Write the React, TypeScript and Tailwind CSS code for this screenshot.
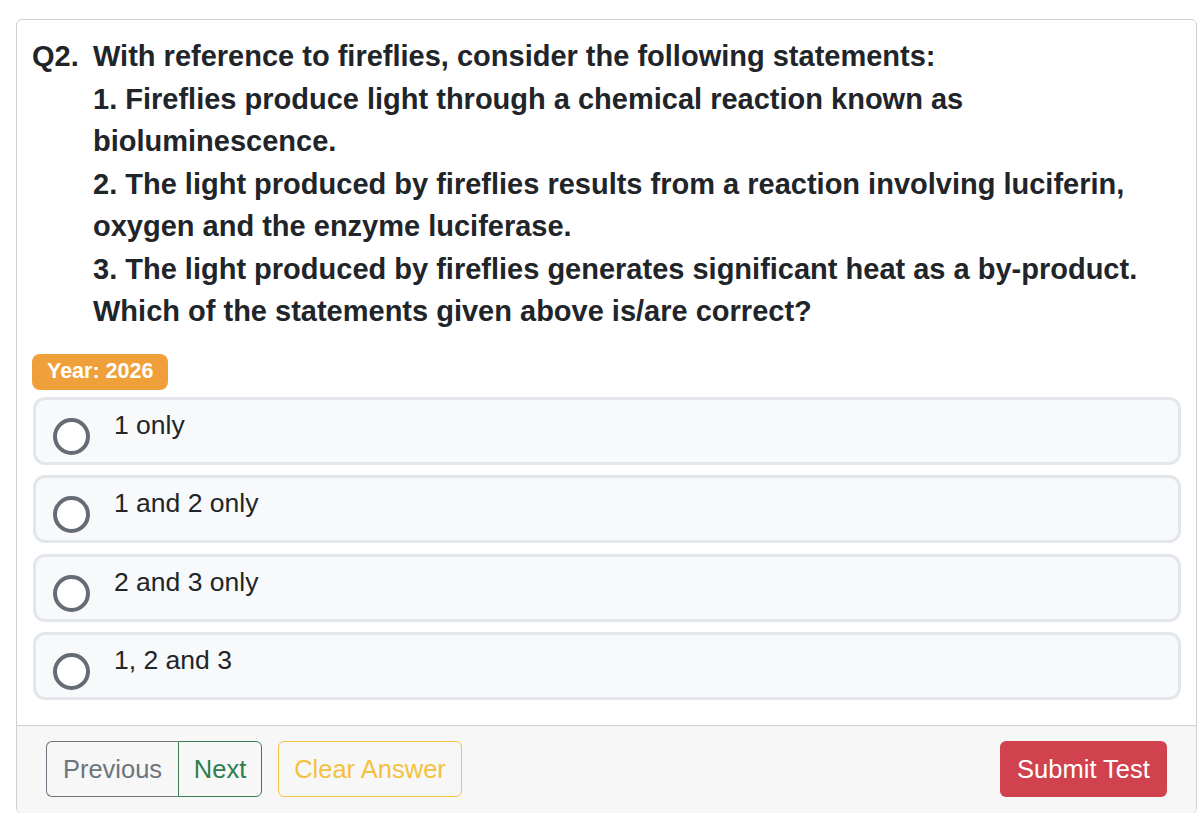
import React from "react";

const options = ["1 only", "1 and 2 only", "2 and 3 only", "1, 2 and 3"];

export default function App() {
  return (
    <div
      className="min-h-[813px] bg-white pt-[19px] pl-[16px] pr-[3px] text-[#212529]"
      style={{ fontFamily: '"Liberation Sans", Arial, sans-serif' }}
    >
      <div className="overflow-hidden rounded-[6px] border border-[#d0d0d0] bg-white">
        <div className="px-[15px] pt-[15px] pb-[25px]">
          <div className="flex text-[29px] font-bold leading-[42.5px]">
            <div className="w-[61px] shrink-0">Q2.</div>
            <div>
              <div>With reference to fireflies, consider the following statements:</div>
              <div>1. Fireflies produce light through a chemical reaction known as bioluminescence.</div>
              <div>2. The light produced by fireflies results from a reaction involving luciferin, oxygen and the enzyme luciferase.</div>
              <div>3. The light produced by fireflies generates significant heat as a by-product.</div>
              <div>Which of the statements given above is/are correct?</div>
            </div>
          </div>
          <div className="mt-[21px] inline-flex h-[36px] items-center rounded-[8px] bg-[#f0a03a] px-[15px] text-[21.5px] font-bold text-white">
            Year: 2026
          </div>
          <div className="mt-[7px] ml-[1px] flex flex-col gap-[10.5px]">
            {options.map((o) => (
              <div
                key={o}
                className="flex h-[68px] items-start rounded-[12px] border-[3px] border-[#e3e7eb] bg-[#f8f9fa] pl-[17px]"
              >
                <div className="mt-[18px] h-[37px] w-[37px] shrink-0 rounded-full border-[4px] border-[#656c76] bg-white" />
                <div className="ml-[24px] mt-[5px] text-[26.5px] leading-[40px] text-[#212529]">{o}</div>
              </div>
            ))}
          </div>
        </div>
        <div className="flex items-center justify-between border-t border-[#d0d0d0] bg-[#f7f7f7] px-[29px] pt-[15px] pb-[16px]">
          <div className="flex items-center gap-[16px]">
            <div className="flex">
              <button className="h-[56px] w-[132px] rounded-l-[6px] border-[1.5px] border-r-0 border-[#6c757d] text-[25.5px] text-[#6c757d]">
                Previous
              </button>
              <button className="h-[56px] w-[84px] rounded-r-[6px] border-[1.5px] border-[#3a7d55] text-[25.5px] text-[#2e7d4f]">
                Next
              </button>
            </div>
            <button className="h-[56px] w-[184px] rounded-[6px] border-[1.5px] border-[#f6c443] text-[25.5px] text-[#f4c13f]">
              Clear Answer
            </button>
          </div>
          <button className="h-[56px] w-[167px] rounded-[6px] bg-[#d0434e] text-[25.5px] text-white">
            Submit Test
          </button>
        </div>
      </div>
    </div>
  );
}
